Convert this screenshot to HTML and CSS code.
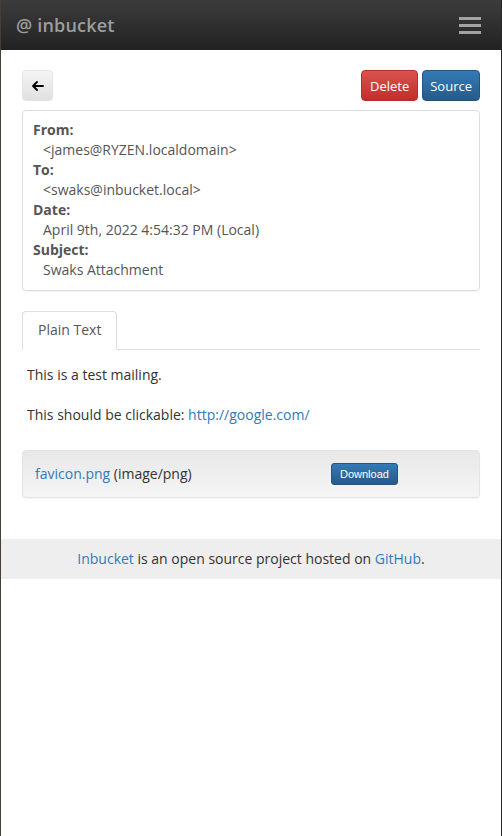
FILE: index.html
```html
<!DOCTYPE html>
<html lang="en">
<head>
<meta charset="utf-8">
<title>inbucket</title>
<link rel="stylesheet" href="styles.css">
</head>
<body>
<div class="frame">
  <header class="navbar">
    <span class="brand">@ inbucket</span>
    <span class="burger" aria-label="menu"><i></i><i></i><i></i></span>
  </header>
  <main class="page">
    <div class="toolbar">
      <button class="btn btn-default back" aria-label="back">
        <svg width="12" height="10" viewBox="0 0 12 10"><path d="M5 1 L1 5 L5 9 M1 5 H11" fill="none" stroke="#000" stroke-width="1.8" stroke-linecap="round" stroke-linejoin="round"/></svg>
      </button>
      <div class="actions">
        <button class="btn btn-danger">Delete</button>
        <button class="btn btn-primary">Source</button>
      </div>
    </div>
    <dl class="headers">
      <dt>From:</dt><dd>&lt;james@RYZEN.localdomain&gt;</dd>
      <dt>To:</dt><dd>&lt;swaks@inbucket.local&gt;</dd>
      <dt>Date:</dt><dd>April 9th, 2022 4:54:32 PM (Local)</dd>
      <dt>Subject:</dt><dd>Swaks Attachment</dd>
    </dl>
    <ul class="tabs">
      <li class="tab active">Plain Text</li>
    </ul>
    <div class="body-text">
      <p>This is a test mailing.</p>
      <p>This should be clickable: <a href="#">http://google.com/</a></p>
    </div>
    <div class="attachments">
      <span class="att-name"><a href="#">favicon.png</a> (image/png)</span>
      <button class="btn-dl">Download</button>
    </div>
  </main>
  <footer class="footer">
    <p><a href="#">Inbucket</a> is an open source project hosted on <a href="#">GitHub</a>.</p>
  </footer>
</div>
</body>
</html>
```

FILE: styles.css
```css
html, body {
  margin: 0;
  padding: 0;
  background: #fff;
}
.frame {
  min-height: 836px;
  box-sizing: border-box;
  border-left: 1px solid #4a3c38;
  border-right: 1px solid #262626;
  font-family: "Open Sans", "Liberation Sans", sans-serif;
  font-size: 14px;
  line-height: 20px;
  color: #333;
}
a { color: #337ab7; text-decoration: none; }

.navbar {
  height: 50px;
  display: flex;
  align-items: center;
  justify-content: space-between;
  padding: 0 20px 0 15px;
  background: linear-gradient(to bottom, #3c3c3c 0%, #222 100%);
}
.brand {
  color: #9d9d9d;
  font-size: 18px;
  font-weight: 600;
  letter-spacing: 0.2px;
}
.burger {
  display: flex;
  flex-direction: column;
  gap: 4px;
  width: 22px;
}
.burger i {
  display: block;
  height: 3px;
  background: #a3a3a3;
}

.page {
  padding: 20px 21px 41px;
}
.toolbar {
  display: flex;
  justify-content: space-between;
  align-items: center;
}
.actions { display: flex; gap: 4px; }
.btn {
  font-family: "Open Sans", "Liberation Sans", sans-serif;
  font-size: 13px;
  height: 31px;
  padding: 0 8px;
  border-radius: 4px;
  border: 1px solid transparent;
  color: #fff;
  cursor: pointer;
}
.btn-default {
  width: 31px;
  padding: 0;
  background: linear-gradient(to bottom, #f5f5f5 0%, #e0e0e0 100%);
  border-color: #e4e4e4;
  display: flex;
  align-items: center;
  justify-content: center;
}
.btn-danger {
  background: linear-gradient(to bottom, #d9534f 0%, #c12e2a 100%);
  border-color: #b92c28;
}
.btn-primary {
  background: linear-gradient(to bottom, #337ab7 0%, #265a88 100%);
  border-color: #245580;
  padding: 0 7px;
}

.headers {
  margin: 9px 0 0;
  padding: 9px 10px 10px;
  border: 1px solid #ddd;
  border-radius: 4px;
  box-shadow: 0 1px 1px rgba(0,0,0,0.05);
  color: #555;
}
.headers dt { font-weight: 700; }
.headers dd { margin: 0 0 0 10px; }

.tabs {
  list-style: none;
  margin: 20px 0 0;
  padding: 0;
  display: flex;
  border-bottom: 1px solid #ddd;
}
.tab {
  padding: 8px 15px 9px;
  margin-bottom: -1px;
  border: 1px solid #ddd;
  border-bottom-color: #fff;
  border-radius: 4px 4px 0 0;
  color: #555;
  background: #fff;
}

.body-text {
  padding: 15px 5px 0;
}
.body-text p { margin: 0 0 20px; }
.body-text p:last-child { margin-bottom: 0; }

.attachments {
  margin-top: 25px;
  height: 48px;
  box-sizing: border-box;
  display: flex;
  align-items: center;
  padding: 0 12px;
  border: 1px solid #e3e3e3;
  border-radius: 4px;
  background: linear-gradient(to bottom, #e8e8e8 0%, #f5f5f5 100%);
  box-shadow: 0 1px 2px rgba(0,0,0,0.05);
}
.att-name { width: 296px; }
.btn-dl {
  font-family: "Liberation Sans", Arial, sans-serif;
  font-size: 11px;
  color: #fff;
  height: 22px;
  padding: 0 8px;
  border-radius: 3px;
  border: 1px solid #245580;
  background: linear-gradient(to bottom, #337ab7 0%, #265a88 100%);
}

.footer {
  background: #eee;
  height: 40px;
  text-align: center;
}
.footer p {
  margin: 0;
  line-height: 40px;
}
```
